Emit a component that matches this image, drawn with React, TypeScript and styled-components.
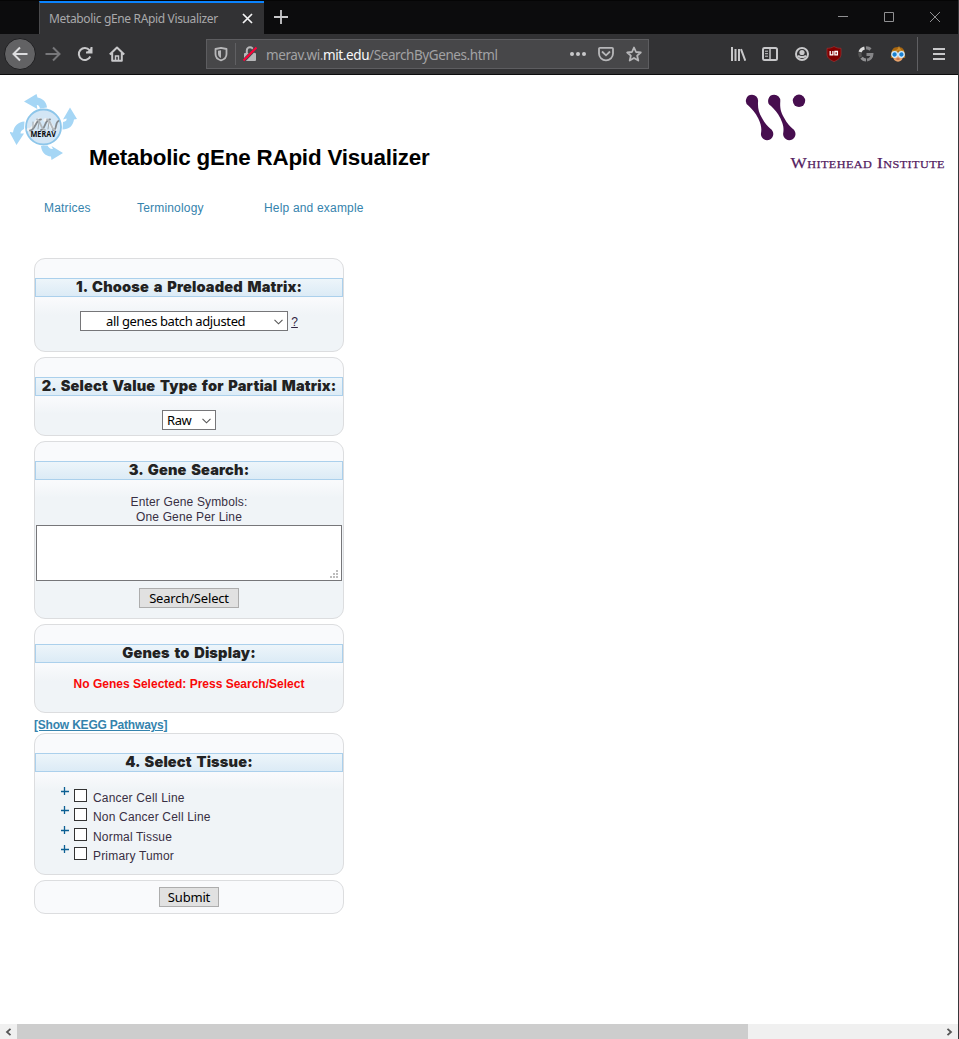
import React from "react";
import styled, { createGlobalStyle } from "styled-components";

const Global = createGlobalStyle`
  *, *::before, *::after { box-sizing: border-box; }
  html, body { margin: 0; padding: 0; background: #fff; overflow: hidden; }
  button, textarea { margin: 0; font: inherit; border-radius: 0; }
  svg { display: block; flex: none; }
`;

const ui = `"Noto Sans", "Open Sans", sans-serif`;
const arial = `"Liberation Sans", Arial, sans-serif`;

const Window = styled.div`
  width: 959px;
  height: 1039px;
  display: flex;
  flex-direction: column;
  background: #fff;
  border-right: 1px solid #37373a;
  overflow: hidden;
`;

const TabStrip = styled.div`
  height: 34px;
  display: flex;
  background: #0c0c0d;
  border-top: 1px solid #050505;
  padding-left: 39px;
`;

const Tab = styled.div`
  width: 225px;
  height: 33px;
  display: flex;
  align-items: center;
  justify-content: space-between;
  padding: 0 11px 0 9px;
  background: #323234;
  border-top: 2px solid #0a84ff;
  border-left: 1px solid #4a4a4c;
  font: 12px/16px ${ui};
  letter-spacing: -0.35px;
  color: #a9a9ab;
  white-space: nowrap;
  span { padding-top: 1px; }
  svg { margin-top: -1px; }
`;

const NewTab = styled.div`
  padding: 8px 0 0 9px;
`;

const WindowControls = styled.div`
  display: flex;
  gap: 30px;
  margin-left: auto;
  padding: 8px 15px 0 0;
`;

const Toolbar = styled.div`
  height: 41px;
  display: flex;
  align-items: center;
  background: #323234;
  border-bottom: 1px solid #0c0c0d;
  padding-left: 4px;
`;

const BackButton = styled.div`
  width: 32px;
  height: 32px;
  border-radius: 50%;
  background: #626264;
  border: 1px solid #1f1f21;
  display: grid;
  place-items: center;
`;

const NavIcons = styled.div`
  display: flex;
  gap: 16px;
  margin-left: 9px;
`;

const UrlBar = styled.div`
  width: 443px;
  height: 30px;
  margin-left: 81px;
  display: flex;
  align-items: center;
  padding: 0 6px;
  background: #474749;
  border: 1px solid #5d5d60;
`;

const Divider = styled.div<{ $h: number; $m?: number }>`
  width: 1px;
  height: ${(p) => p.$h}px;
  margin: 0 ${(p) => p.$m ?? 0}px;
  background: #606063;
`;

const Url = styled.div`
  flex: 1;
  margin: 2px 0 0 8px;
  font: 13.5px/20px ${ui};
  letter-spacing: -0.41px;
  color: #a2a2a4;
  white-space: nowrap;
  b { color: #f9f9fa; font-weight: 400; }
`;

const UrlActions = styled.div`
  display: flex;
  gap: 12px;
`;

const Extensions = styled.div`
  display: flex;
  gap: 16px;
  margin: 0 11px 0 auto;
`;

const Menu = styled.div`
  padding: 0 11px 0 13px;
`;

const Page = styled.main`
  flex: 1;
  display: flex;
  flex-direction: column;
  font: 12px/15px ${arial};
  color: #363636;
`;

const Header = styled.header`
  height: 110px;
  display: flex;
  align-items: flex-start;
  padding: 18px 13px 0 10px;
`;

const Title = styled.h1`
  margin: 51px 0 0 12px;
  font: bold 22.4px/28px ${arial};
  letter-spacing: -0.2px;
  color: #000;
  white-space: nowrap;
`;

const Institute = styled.div`
  width: 200px;
  margin-left: auto;
`;

const Nav = styled.nav`
  display: flex;
  padding: 16px 0 0 44px;
`;

const NavLink = styled.a<{ $w: number }>`
  width: ${(p) => p.$w}px;
  color: #3583ad;
  letter-spacing: 0.18px;
`;

const Form = styled.form`
  width: 310px;
  margin: 42px 0 0 34px;
  display: flex;
  flex-direction: column;
`;

const Panel = styled.section<{ $h: number; $top?: number }>`
  height: ${(p) => p.$h}px;
  margin-bottom: 5px;
  padding-top: ${(p) => p.$top ?? 0}px;
  border: 1px solid #dcdddf;
  border-radius: 11px;
  background: linear-gradient(#f9fafc 40px, #f0f4f7 56px);
  display: flex;
  flex-direction: column;
  align-items: center;
`;

const Heading = styled.h2`
  width: 100%;
  height: 19px;
  margin: 19px 0 14px;
  border: 1px solid #abd0ec;
  background: linear-gradient(#edf5fa, #dcebf6);
  font: 900 14.6px/17px Inter, ${arial};
  letter-spacing: 0.15px;
  word-spacing: 1.6px;
  text-align: center;
  color: #222;
  white-space: nowrap;
`;

const Line = styled.div`
  display: flex;
  gap: 3px;
`;

const Select = styled.div<{ $w: number; $left?: boolean }>`
  width: ${(p) => p.$w}px;
  height: 20px;
  display: flex;
  align-items: center;
  padding: 0 4px;
  border: 1px solid #767679;
  background: #fff;
  font: 13px/18px ${ui};
  letter-spacing: -0.38px;
  color: #000;
  span {
    flex: 1;
    padding-right: ${(p) => (p.$left ? 0 : 8)}px;
    text-align: ${(p) => (p.$left ? "left" : "center")};
    white-space: nowrap;
  }
  svg { margin-top: 2px; }
`;

const Help = styled.a`
  color: #2f2440;
  text-decoration: underline;
  line-height: 22px;
`;

const Hint = styled.div`
  padding-top: 1px;
  text-align: center;
  color: #382f43;
  letter-spacing: 0.15px;
`;

const Genes = styled.textarea`
  width: 306px;
  height: 56px;
  margin: 0 0 7px;
  border: 1px solid #767679;
  background: #fff;
  resize: none;
  outline: none;
`;

const GeneBox = styled.div`
  position: relative;
  display: flex;
`;

const Grip = styled.svg`
  position: absolute;
  right: 3px;
  bottom: 10px;
`;

const Button = styled.button<{ $w: number }>`
  width: ${(p) => p.$w}px;
  height: 20px;
  padding: 1px 0 0;
  border: 1px solid #adadad;
  background: #e1e1e1;
  font: 13px/17px ${ui};
  letter-spacing: -0.18px;
  color: #000;
`;

const Warning = styled.strong`
  color: #f90808;
`;

const Kegg = styled.a`
  height: 15px;
  font-weight: bold;
  color: #3583ad;
  text-decoration: underline;
  letter-spacing: -0.2px;
`;

const Tissues = styled.ul`
  width: 100%;
  margin: 3px 0 0;
  padding: 0 0 0 26px;
  list-style: none;
`;

const Tissue = styled.li`
  height: 19.4px;
  display: flex;
  align-items: flex-start;
  color: #382f43;
  letter-spacing: 0.18px;
  svg { margin-top: -2px; }
  span { margin-top: 2px; }
`;

const Check = styled.i`
  width: 13px;
  height: 13px;
  margin: 0 6px 0 5px;
  border: 1px solid #333;
  background: #fff;
`;

const ScrollBar = styled.div`
  height: 15px;
  display: grid;
  grid-template-columns: 17px 731px 1fr 17px;
  align-items: center;
  justify-items: center;
  background: #f0f0f0;
`;

const Thumb = styled.div`
  width: 100%;
  height: 15px;
  background: #cdcdcd;
`;

const Icon = ({ children, color = "#c8c8ca", sw = 2, ...rest }: React.SVGProps<SVGSVGElement> & { sw?: number }) => (
  <svg width="16" height="16" viewBox="0 0 16 16" fill="none" stroke={color} strokeWidth={sw} {...rest}>
    {children}
  </svg>
);

const Chevron = () => (
  <svg width="9" height="6" viewBox="0 0 9 6" fill="none" stroke="#555" strokeWidth="1.1">
    <path d="M.5 .8 4.5 4.8 8.5 .8" />
  </svg>
);

const MeravLogo = () => (
  <svg width="67" height="68" viewBox="10 93 67 68">
    <g fill="#a5d6f5">
      <path d="M24 101.500 36.500 94 37.500 97.500C43 98.500 46.500 102 47 107.500L40 108.500C39.500 105.500 37.500 104.500 36.800 105L37.300 109Z" />
      <path d="M70 107.500 77 119 74 119.500C73 126 69 129.500 62.500 129.500L63 122C66 121.500 67 120.500 66.500 118.500L63 119.500Z" />
      <path d="M63 153 51.500 160 51 156.500C45.500 156 41.500 152.500 41 146L47.500 145.500C49 148 50.500 149.500 53 149L51.500 146Z" />
      <path d="M16.500 145 9.500 132 13 132.500C14 126 18 122 24.500 121.500L24 129C21.500 130 20.500 132 20.500 133.500L24 133.500Z" />
    </g>
    <circle cx="43.500" cy="127" r="17.500" fill="#d3e6f5" stroke="#8dc6ea" strokeWidth="1.800" />
    <g fill="none" strokeLinecap="round">
      <path d="M28.500 129.500C34 132 35 119 40 119.500M45 120C50 118 51 130 55 129" stroke="#f0f2f4" strokeWidth="3.500" />
      <path d="M30 130.500C35 131 36 119 41 119.500M41 130C45 130 45 119 50 119.500M53 130C57 131 55 122 58.500 121" stroke="#83888d" strokeWidth="1.800" />
      <path d="M37 119.500C40 119 41 130 45 130M47 119.500C51 119 51 130 55 130" stroke="#b3b8bc" strokeWidth="1.800" />
      <path d="M33 122V128M39 122 38 129M49 122 48 129" stroke="#a0a6aa" strokeWidth="1" />
    </g>
    <text x="30.500" y="137.300" textLength="25.500" lengthAdjust="spacingAndGlyphs" fontFamily="'Open Sans', sans-serif" fontWeight="700" fontSize="8" fill="#0a0a0a">MERAV</text>
  </svg>
);

const InstituteLogo = () => (
  <svg width="200" height="78" viewBox="745 93 200 78">
    <g fill="#470e4f">
      <circle cx="799" cy="100.800" r="6.200" />
      {[0, 22.200].map((dx) => (
        <path
          key={dx}
          transform={`translate(${dx} 0)`}
          d="M752 94.700A6.100 6.100 0 0 1 758.100 101C757.600 108 758.500 112 762 118C765 123.500 767.500 126.300 770.500 128.800A6.200 6.200 0 1 1 760.900 134C762 128 761 124.500 758.300 118.500C755.500 112.500 752 109 748.800 106A6.100 6.100 0 0 1 752 94.700Z"
        />
      ))}
    </g>
    <g fill="#53205f" stroke="#53205f" strokeWidth=".25" fontFamily="'Liberation Serif', serif">
      <text x="790.500" y="168.200" textLength="154.500" lengthAdjust="spacingAndGlyphs" fontSize="15.500" letterSpacing=".4" style={{ fontVariant: "small-caps" }}>
        Whitehead Institute
      </text>
    </g>
  </svg>
);

const Browser = () => (
  <>
    <TabStrip>
      <Tab>
        <span>Metabolic gEne RApid Visualizer</span>
        <svg width="11" height="11" viewBox="0 0 11 11" stroke="#f4f4f5" strokeWidth="1.700"><path d="M1 1 10 10M10 1 1 10" /></svg>
      </Tab>
      <NewTab><Icon sw={1.8}><path d="M8 1V15M1 8H15" /></Icon></NewTab>
      <WindowControls>
        {["M3 7.500H13", "M3.500 3.500H12.500V12.500H3.500Z", "M3 3 13 13M13 3 3 13"].map((d) => (
          <Icon key={d} color="#909092" sw={1}><path d={d} /></Icon>
        ))}
      </WindowControls>
    </TabStrip>
    <Toolbar>
      <BackButton><Icon color="#dddddf"><path d="M15.500 8H1.500M8 1.500 1.500 8 8 14.500" /></Icon></BackButton>
      <NavIcons>
        <Icon color="#77777a"><path d="M.5 8H14.500M8 1.500 14.500 8 8 14.500" /></Icon>
        <Icon><path d="M13.300 10.500A6 6 0 1 1 12.500 4.200" /><path d="M14.500 1.500V6.500H9.500Z" fill="#c8c8ca" stroke="none" /><path d="M14.500 1V6.500H9" /></Icon>
        <Icon><path d="M.8 8.500 8 1.500 15.200 8.500M3.200 7V14.700H12.800V7" strokeLinejoin="round" /><path d="M6.500 14V10H9.500V14" strokeWidth="1.500" /></Icon>
      </NavIcons>
      <UrlBar>
        <Icon color="#b7b7b9" sw={1.8}><path d="M8 1.800 13.500 3V8C13.500 11 11 13.500 8 14.400 5 13.500 2.500 11 2.500 8V3Z" strokeLinejoin="round" /><path d="M8 4.200V12C6 11 5 9.500 5 7.500V4.800Z" fill="#b7b7b9" stroke="none" /></Icon>
        <Divider $h={22} $m={6} />
        <Icon color="#b7b7b9"><path d="M4.800 7V4.500A3.200 3.200 0 0 1 11.200 4.500V7" /><rect x="2" y="7" width="12" height="8" rx="1" fill="#b7b7b9" stroke="none" /><path d="M1.500 15 14.500 1.500" stroke="#474749" strokeWidth="3.4" /><path d="M1.500 14.500 14.500 1.500" stroke="#ff0039" strokeWidth="2" /></Icon>
        <Url>merav.wi.<b>mit.edu</b>/SearchByGenes.html</Url>
        <UrlActions>
          <Icon><g fill="#c8c8ca" stroke="none"><circle cx="2" cy="8" r="2" /><circle cx="8" cy="8" r="2" /><circle cx="14" cy="8" r="2" /></g></Icon>
          <Icon sw={1.8} color="#b7b7b9"><path d="M2 1.800H14A1 1 0 0 1 15 2.800V7.500A7 6.800 0 0 1 1 7.500V2.800A1 1 0 0 1 2 1.800Z" /><path d="M4.500 6 8 9.300 11.500 6" strokeLinecap="round" /></Icon>
          <Icon sw={1.8} color="#b7b7b9"><path d="M8 1.500 10 6 14.800 6.500 11.200 9.700 12.300 14.600 8 12 3.700 14.600 4.800 9.700 1.200 6.500 6 6Z" strokeLinejoin="round" /></Icon>
        </UrlActions>
      </UrlBar>
      <Extensions>
        <Icon><path d="M2 1V15M5.500 3V15M9 3V15M11 3.200 15.300 14.700" /></Icon>
        <Icon><rect x="1" y="2" width="14" height="12" rx="1.500" /><path d="M8 2V14" strokeWidth="1.500" /><path d="M3 5.200H6M3 7.700H6M3 10.200H6" strokeWidth="1" /></Icon>
        <Icon><circle cx="8" cy="8" r="6" /><circle cx="8" cy="6.500" r="2.600" fill="#c8c8ca" stroke="none" /><path d="M4 9.500C5 11.500 11 11.500 12 9.500" /></Icon>
        <Icon><path d="M8 .5C10 1.800 12.500 2.300 15 2.300V8C15 11.500 12.500 13.700 8 15.600 3.500 13.700 1 11.500 1 8V2.300C3.500 2.300 6 1.800 8 .5Z" fill="#800000" stroke="#a03030" strokeWidth=".7" /><path d="M4.200 5V8.800H6.900V5M8.400 5.500H11.400V8.800H8.900V5" stroke="#fff" strokeWidth="1.300" /></Icon>
        <Icon sw={3.2}><path d="M12.500 3.500A6 6 0 0 0 8 2" stroke="#858587" /><path d="M6.500 2A6 6 0 0 0 2 6" stroke="#ddd" /><path d="M2 6.500A6 6 0 0 0 2.800 11" stroke="#555" /><path d="M3.500 11.800A6 6 0 0 0 8 14" stroke="#909092" /><path d="M9 14A6 6 0 0 0 14 8.500H8.500" stroke="#858587" strokeWidth="2.800" /></Icon>
        <Icon><path d="M.8 12C.8 4 3 1 8 1S15.200 4 15.200 12Z" fill="#a8660f" stroke="none" /><path d="M3 7H13V10C13 17.500 3 17.500 3 10Z" fill="#e9a36b" stroke="none" /><path d="M2 5.500C5 5.500 8 5 9 2.500 10 5 12 5.500 14 5.500" stroke="#c98a2b" /><circle cx="4.600" cy="8.500" r="2.800" fill="#1980cf" stroke="#cfeaff" strokeWidth="1.300" /><circle cx="11.400" cy="8.500" r="2.800" fill="#1980cf" stroke="#cfeaff" strokeWidth="1.300" /><path d="M6.500 13H9.500" stroke="#a94935" strokeWidth="1" /></Icon>
      </Extensions>
      <Divider $h={34} />
      <Menu><Icon><path d="M2 3H14M2 8H14M2 13H14" /></Icon></Menu>
    </Toolbar>
  </>
);

const tissues = ["Cancer Cell Line", "Non Cancer Cell Line", "Normal Tissue", "Primary Tumor"];

export default function App() {
  return (
    <Window>
      <Global />
      <Browser />
      <Page>
        <Header>
          <MeravLogo />
          <Title>Metabolic gEne RApid Visualizer</Title>
          <Institute><InstituteLogo /></Institute>
        </Header>
        <Nav>
          <NavLink $w={93}>Matrices</NavLink>
          <NavLink $w={127}>Terminology</NavLink>
          <NavLink $w={120}>Help and example</NavLink>
        </Nav>
        <Form>
          <Panel $h={94}>
            <Heading>1. Choose a Preloaded Matrix:</Heading>
            <Line>
              <Select $w={208}><span>all genes batch adjusted</span><Chevron /></Select>
              <Help>?</Help>
            </Line>
          </Panel>
          <Panel $h={79}>
            <Heading>2. Select Value Type for Partial Matrix:</Heading>
            <Select $w={54} $left><span>Raw</span><Chevron /></Select>
          </Panel>
          <Panel $h={178}>
            <Heading>3. Gene Search:</Heading>
            <Hint>Enter Gene Symbols:<br />One Gene Per Line</Hint>
            <GeneBox>
              <Genes />
              <Grip width="9" height="8" viewBox="0 0 9 8" fill="#bdbdbd">
                <path d="M6 0h2v2h-2zM3 3h2v2h-2zM6 3h2v2h-2zM0 6h2v2h-2zM3 6h2v2h-2zM6 6h2v2h-2z" />
              </Grip>
            </GeneBox>
            <Button type="button" $w={100}>Search/Select</Button>
          </Panel>
          <Panel $h={89}>
            <Heading>Genes to Display:</Heading>
            <Warning>No Genes Selected: Press Search/Select</Warning>
          </Panel>
          <Kegg>[Show KEGG Pathways]</Kegg>
          <Panel $h={142}>
            <Heading>4. Select Tissue:</Heading>
            <Tissues>
              {tissues.map((t) => (
                <Tissue key={t}>
                  <svg width="8" height="8" viewBox="0 0 8 8" stroke="#0b5f93" strokeWidth="1.300"><path d="M0 4.500H8M3.500 0V8" /></svg>
                  <Check />
                  <span>{t}</span>
                </Tissue>
              ))}
            </Tissues>
          </Panel>
          <Panel $h={34} $top={6}>
            <Button type="button" $w={60}>Submit</Button>
          </Panel>
        </Form>
      </Page>
      <ScrollBar>
        <svg width="7" height="8" viewBox="0 0 7 8" fill="none" stroke="#555" strokeWidth="1.800"><path d="M5.500 .8 2 4 5.500 7.200" /></svg>
        <Thumb />
        <span />
        <svg width="7" height="8" viewBox="0 0 7 8" fill="none" stroke="#555" strokeWidth="1.800"><path d="M1.500 .8 5 4 1.500 7.200" /></svg>
      </ScrollBar>
    </Window>
  );
}
